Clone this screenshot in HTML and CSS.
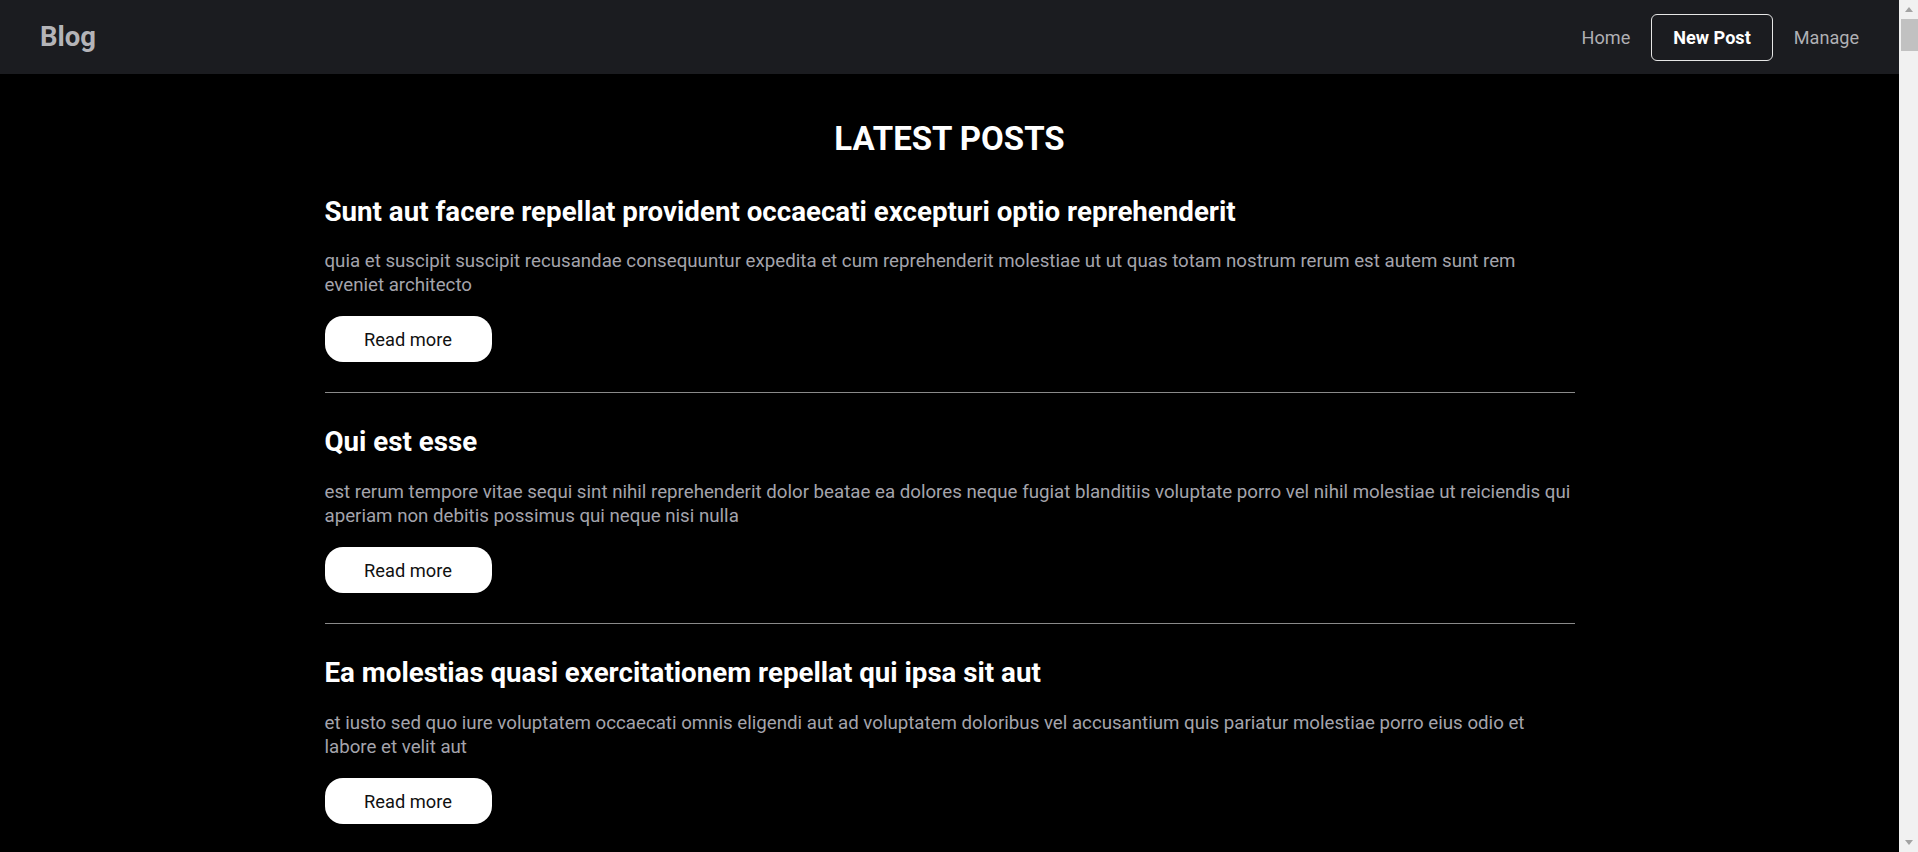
FILE: index.html
```html
<!DOCTYPE html>
<html lang="en">
<head>
<meta charset="utf-8">
<title>Blog</title>
<link rel="stylesheet" href="styles.css">
</head>
<body>
<header class="navbar">
  <a class="brand" href="#">Blog</a>
  <nav class="nav">
    <a class="nav-link" href="#">Home</a>
    <a class="nav-link nav-link--active" href="#">New Post</a>
    <a class="nav-link" href="#">Manage</a>
  </nav>
</header>
<main class="container">
  <h1 class="page-title">LATEST POSTS</h1>

  <article class="post">
    <h2 class="post-title">Sunt aut facere repellat provident occaecati excepturi optio reprehenderit</h2>
    <p class="post-body">quia et suscipit suscipit recusandae consequuntur expedita et cum reprehenderit molestiae ut ut quas totam nostrum rerum est autem sunt rem eveniet architecto</p>
    <a class="btn" href="#">Read more</a>
  </article>

  <article class="post">
    <h2 class="post-title">Qui est esse</h2>
    <p class="post-body">est rerum tempore vitae sequi sint nihil reprehenderit dolor beatae ea dolores neque fugiat blanditiis voluptate porro vel nihil molestiae ut reiciendis qui aperiam non debitis possimus qui neque nisi nulla</p>
    <a class="btn" href="#">Read more</a>
  </article>

  <article class="post">
    <h2 class="post-title">Ea molestias quasi exercitationem repellat qui ipsa sit aut</h2>
    <p class="post-body">et iusto sed quo iure voluptatem occaecati omnis eligendi aut ad voluptatem doloribus vel accusantium quis pariatur molestiae porro eius odio et labore et velit aut</p>
    <a class="btn" href="#">Read more</a>
  </article>
</main>

<div class="scrollbar" aria-hidden="true">
  <span class="scrollbar-arrow scrollbar-arrow--up"></span>
  <span class="scrollbar-thumb"></span>
  <span class="scrollbar-track"></span>
  <span class="scrollbar-arrow scrollbar-arrow--down"></span>
</div>
</body>
</html>
```
FILE: styles.css
```css
* { box-sizing: border-box; }

html, body {
  margin: 0;
  padding: 0;
  background: #000;
}

body {
  font-family: Roboto, "Liberation Sans", Arial, sans-serif;
  color: #fff;
  padding-right: 19px;
}

a { text-decoration: none; }

.navbar {
  height: 74px;
  background: #1b1c20;
  display: flex;
  align-items: center;
  justify-content: space-between;
  padding: 0 19px 0 40px;
}

.brand {
  font-size: 27.5px;
  font-weight: 700;
  color: #b4b4b8;
  line-height: 1;
}

.nav {
  display: flex;
  align-items: center;
}

.nav-link {
  display: block;
  font-size: 18.1px;
  line-height: 21px;
  padding: 12px 20px;
  color: #b0b0b4;
  border: 1px solid transparent;
  border-radius: 6px;
}

.nav-link--active {
  color: #fff;
  font-weight: 700;
  border-color: #e6e6e6;
  padding: 12px 21px;
}

.container {
  width: 1250px;
  margin: 0 auto;
  padding-bottom: 40px;
}

.page-title {
  margin: 45px 0 36px;
  font-size: 33px;
  line-height: 1.2;
  font-weight: 700;
  text-align: center;
  color: #fff;
}

.post {
  padding-bottom: 30px;
  border-bottom: 1px solid #8a8a8a;
  margin-bottom: 32px;
}

.post-title {
  margin: 0;
  font-size: 27.7px;
  line-height: 1.2;
  font-weight: 700;
  color: #fff;
}

.post-body {
  margin: 21.5px 0 0;
  font-size: 18.7px;
  line-height: 24px;
  color: #a4a4ac;
}

.btn {
  display: inline-block;
  margin-top: 19px;
  width: 167px;
  height: 46px;
  padding: 13px 0 11px;
  text-align: center;
  font-size: 18.3px;
  line-height: 22px;
  color: #111;
  background: #fff;
  border-radius: 18px;
}

/* simulated browser scrollbar */
.scrollbar {
  position: fixed;
  top: 0;
  right: 0;
  bottom: 0;
  width: 19px;
  background: #f1f1f1;
  display: flex;
  flex-direction: column;
  align-items: stretch;
}

.scrollbar-arrow {
  height: 17px;
  display: flex;
  align-items: center;
  justify-content: center;
}

.scrollbar-arrow::before {
  content: "";
  width: 0;
  height: 0;
  border-left: 4.5px solid transparent;
  border-right: 4.5px solid transparent;
}

.scrollbar-arrow--up::before {
  border-bottom: 5px solid #a3a3a3;
  margin-top: 2px;
}

.scrollbar-arrow--down::before {
  border-top: 5px solid #a3a3a3;
  margin-bottom: 2px;
}

.scrollbar-thumb {
  height: 32px;
  margin: 2px 0 0 2px;
  background: #c1c1c1;
}

.scrollbar-track {
  flex: 1;
}
```
